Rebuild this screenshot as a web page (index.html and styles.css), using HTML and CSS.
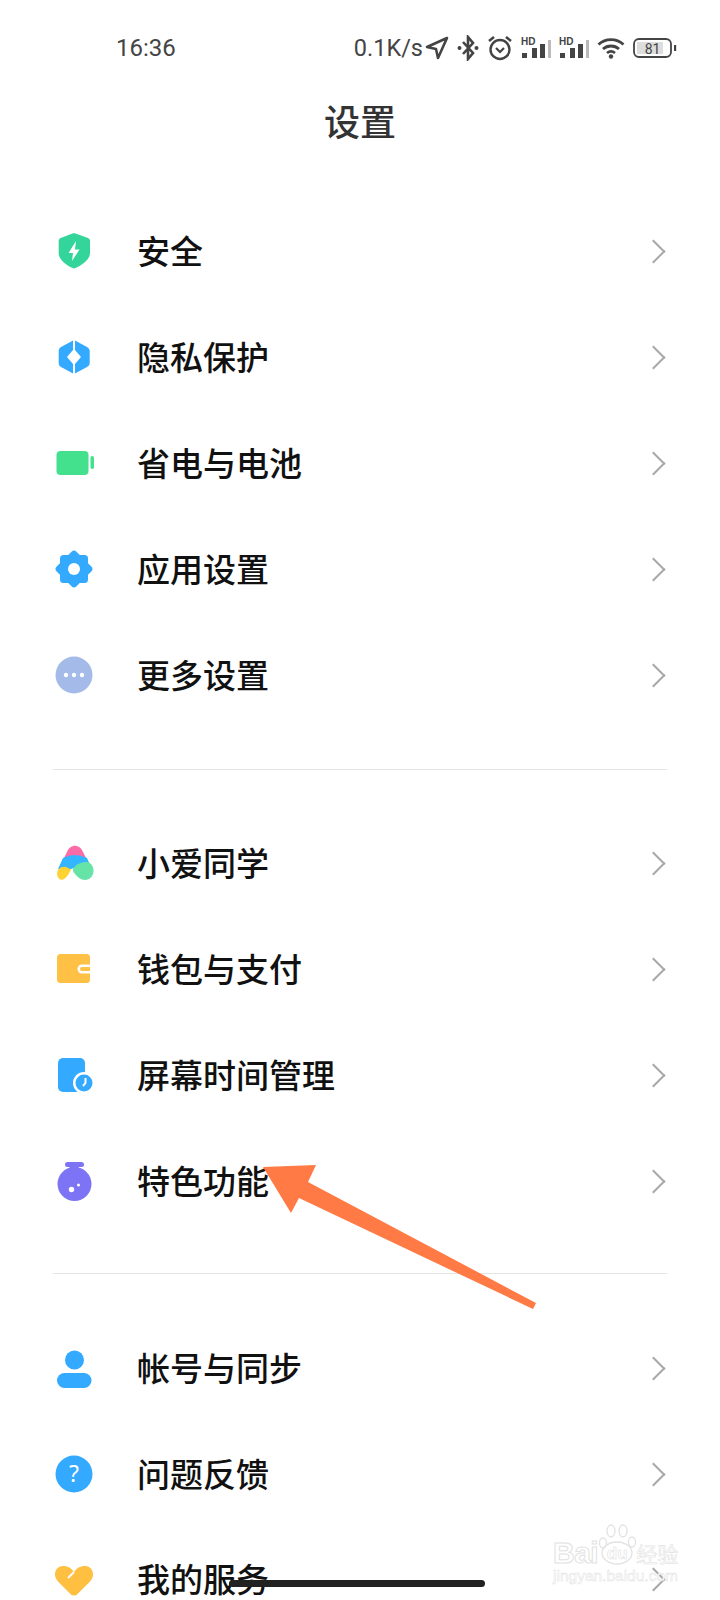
FILE: index.html
```html
<!DOCTYPE html>
<html lang="zh-CN">
<head>
  <meta charset="UTF-8">
  <title>设置</title>
  <link rel="stylesheet" href="styles.css">
</head>
<body>
<div class="screen">

  <div class="status">
    <span class="time">16:36</span>
    <div class="status-right">
      <span class="speed">0.1K/s</span>
      <svg class="st-nav" width="24" height="24" viewBox="0 0 24 24"><path d="M22 2 L2 11 L11 13 L13 22 Z" fill="none" stroke="#444" stroke-width="2.6" stroke-linejoin="round"/></svg>
      <svg width="22" height="26" viewBox="0 0 22 26"><path d="M6 7 L16 18 L11 24 V2 L16 8 L6 19" fill="none" stroke="#444" stroke-width="2.6"/><circle cx="2.5" cy="13" r="2" fill="#444"/><circle cx="19.5" cy="13" r="2" fill="#444"/></svg>
      <svg width="26" height="26" viewBox="0 0 26 26"><circle cx="13" cy="14.5" r="9.5" fill="none" stroke="#444" stroke-width="2.4"/><path d="M9 13 L13 17 L17 13" fill="none" stroke="#444" stroke-width="2.2"/><path d="M2 6 L7 2 M24 6 L19 2" stroke="#444" stroke-width="2.6"/></svg>
      <svg width="30" height="22" viewBox="0 0 30 22"><text class="hd" x="0" y="8">HD</text><rect x="1" y="16" width="5" height="5" fill="#444"/><rect x="11" y="11" width="5" height="10" fill="#444"/><rect x="19" y="7" width="5" height="14" fill="#444"/><rect x="27" y="3" width="3" height="18" fill="#bbb"/></svg>
      <svg width="30" height="22" viewBox="0 0 30 22"><text class="hd" x="0" y="8">HD</text><rect x="1" y="16" width="5" height="5" fill="#444"/><rect x="11" y="11" width="5" height="10" fill="#444"/><rect x="19" y="7" width="5" height="14" fill="#444"/><rect x="27" y="3" width="3" height="18" fill="#bbb"/></svg>
      <svg class="st-wifi" width="28" height="22" viewBox="0 0 28 22"><path d="M1.5 7.5 C8.5 1 19.5 1 26.5 7.5 M6 12 C10.500 8 17.500 8 22 12 M10 16 C12.500 14 15.500 14 18 16" fill="none" stroke="#444" stroke-width="2.800"/><circle cx="14" cy="19.500" r="2.200" fill="#444"/></svg>
      <svg class="st-batt" width="44" height="20" viewBox="0 0 44 20"><rect x="1" y="1" width="37" height="18" rx="5" fill="none" stroke="#444" stroke-width="1.800"/><rect x="4" y="4" width="26" height="12" fill="#ddd"/><text class="batt-num" x="19.500" y="15.500">81</text><rect x="41" y="7" width="2.200" height="6" fill="#444"/></svg>
    </div>
  </div>

  <h1 class="title">设置</h1>

  <div class="group">
    <div class="row">
      <svg class="icon" viewBox="0 0 40 40"><path d="M18.500 2.600 C19.500 2.200 20.500 2.200 21.500 2.600 L34 7 C35.300 7.500 36 8.500 36 10 V22 C36 29 27 35 20 37.500 C13 35 4.700 29 4.700 22 V10 C4.700 8.500 5.400 7.500 6.700 7 Z" fill="#33D59B"/><path d="M22 10 L14.500 22 H19 L18 30 L25.500 18.500 H21 Z" fill="#fff"/></svg>
      <span class="label">安全</span><i class="chevron"></i>
    </div>
    <div class="row">
      <svg class="icon" viewBox="0 0 40 40"><path d="M19 3.500 V13 L13 20 L19 27 V36.500 L7 30 C5.500 29 4.700 28 4.700 26 V14 C4.700 12 5.500 11 7 10 Z" fill="#33A9FF"/><path d="M21 3.500 V13 L27 20 L21 27 V36.500 L33 30 C34.500 29 35.700 28 35.700 26 V14 C35.700 12 34.500 11 33 10 Z" fill="#33A9FF"/></svg>
      <span class="label">隐私保护</span><i class="chevron"></i>
    </div>
    <div class="row">
      <svg class="icon" viewBox="0 0 40 40"><rect x="2.500" y="8" width="32" height="24" rx="4" fill="#43E08E"/><rect x="36.500" y="13" width="3.500" height="13" rx="1.700" fill="#43E08E"/></svg>
      <span class="label">省电与电池</span><i class="chevron"></i>
    </div>
    <div class="row">
      <svg class="icon" viewBox="0 0 40 40"><rect x="6" y="6" width="28" height="28" rx="3.500" fill="#33A9FF"/><rect x="6" y="6" width="28" height="28" rx="3.500" fill="#33A9FF" transform="rotate(45 20 20)"/><circle cx="20" cy="20" r="6" fill="#fff"/></svg>
      <span class="label">应用设置</span><i class="chevron"></i>
    </div>
    <div class="row">
      <svg class="icon" viewBox="0 0 40 40"><circle cx="20" cy="20" r="18.500" fill="#A4BBEA"/><circle cx="12" cy="20" r="2.200" fill="#fff"/><circle cx="20" cy="20" r="2.200" fill="#fff"/><circle cx="28" cy="20" r="2.200" fill="#fff"/></svg>
      <span class="label">更多设置</span><i class="chevron"></i>
    </div>
  </div>

  <hr class="divider divider-first">

  <div class="group">
    <div class="row">
      <svg class="icon" viewBox="0 0 40 40"><path d="M13 9 C16 0.500 26 0.500 29 9 L35 21 H7 Z" fill="#FB6BA6"/><path d="M4 26 L9 15 Q21 9 33 15 L37 24 L28 35 L20 25 L14 27 Z" fill="#33B5FF"/><path d="M4 27 C6 24 9 23.500 12 24 L17 26.500 C15 31 12.500 35 9 36.500 C4.500 38 1.500 32 4 27 Z" fill="#FFD233"/><path d="M19 26 C22 21 27 19 32 19 C37 19 39.500 23.500 39.500 28 C39.500 33 35.500 37 31 37 C26 37 21 32 19 28 Z" fill="#66E3A6"/></svg>
      <span class="label">小爱同学</span><i class="chevron"></i>
    </div>
    <div class="row">
      <svg class="icon" viewBox="0 0 40 40"><rect x="3" y="5" width="33" height="29" rx="3.500" fill="#FFC145"/><path d="M36 15.500 H28 A4.500 4.500 0 0 0 28 24.500 H36 V22 H28 A2 2 0 0 1 28 18 H36 Z" fill="#fff"/></svg>
      <span class="label">钱包与支付</span><i class="chevron"></i>
    </div>
    <div class="row">
      <svg class="icon" viewBox="0 0 40 40"><rect x="4" y="3" width="27" height="34" rx="5" fill="#33A9FF"/><circle cx="30" cy="28" r="11" fill="#fff"/><circle cx="30" cy="28" r="8.500" fill="#33A9FF"/><path d="M31.500 23 L31.500 28 L29 31" fill="none" stroke="#fff" stroke-width="2"/></svg>
      <span class="label">屏幕时间管理</span><i class="chevron"></i>
    </div>
    <div class="row">
      <svg class="icon" viewBox="0 0 40 40"><rect x="11" y="1" width="19" height="5" rx="2.500" fill="#7C74F5"/><rect x="15.500" y="4" width="9" height="8" fill="#7C74F5"/><circle cx="20.500" cy="23" r="17" fill="#7C74F5"/><circle cx="17.500" cy="28.500" r="2.700" fill="#fff"/><circle cx="24.500" cy="24" r="1.500" fill="#fff"/></svg>
      <span class="label">特色功能</span><i class="chevron"></i>
    </div>
  </div>

  <hr class="divider">

  <div class="group">
    <div class="row">
      <svg class="icon" viewBox="0 0 40 40"><circle cx="20.500" cy="12" r="9.500" fill="#33A9FF"/><rect x="3" y="25" width="34.500" height="15" rx="7.500" fill="#33A9FF"/></svg>
      <span class="label">帐号与同步</span><i class="chevron"></i>
    </div>
    <div class="row">
      <svg class="icon" viewBox="0 0 40 40"><circle cx="20" cy="20" r="18.500" fill="#33A9FF"/><text class="qmark" x="20" y="27.500">?</text></svg>
      <span class="label">问题反馈</span><i class="chevron"></i>
    </div>
    <div class="row row-cut">
      <svg class="icon" viewBox="0 0 40 40"><path d="M20 13 C23 8.500 27 7 31 7 C36.500 7 39 11.500 39 15.500 C39 18 38 20 36 22.500 L23.500 35 C21.500 37 18.500 37 16.500 35 L4 22.500 C2 20 1 18 1 15.500 C1 11.500 3.500 7 9 7 C13 7 17 8.500 20 13 Z" fill="#FFBF40"/><path d="M20 13 L14 19" stroke="#fff" stroke-width="2"/></svg>
      <span class="label">我的服务</span><i class="chevron"></i>
    </div>
  </div>

  <!-- annotation arrow drawn over the screenshot -->
  <svg class="arrow" width="720" height="1600" viewBox="0 0 720 1600"><path d="M263 1167 L316 1165 L308 1182 L536 1303 L533 1309 L299 1198 L291 1213 Z" fill="#FF7A45"/></svg>

  <div class="home-bar"></div>

  <div class="watermark">
    <div class="wm-top">
      <span class="wm-bai">Bai</span>
      <span class="wm-du">
        <svg class="wm-paw" width="40" height="44" viewBox="0 0 40 44"><g fill="none" stroke="#e2e2e2" stroke-width="1.300"><ellipse cx="5" cy="21" rx="3.500" ry="5"/><ellipse cx="13" cy="9" rx="4" ry="6"/><ellipse cx="25" cy="9" rx="4" ry="6"/><ellipse cx="34" cy="20" rx="3.500" ry="5"/><ellipse cx="19" cy="31" rx="15" ry="11"/></g></svg>
        du
      </span>
      <span class="wm-jy">经验</span>
    </div>
    <div class="wm-url">jingyan.baidu.com</div>
  </div>

</div>
</body>
</html>
```
FILE: styles.css
```css
html, body {
  margin: 0;
  padding: 0;
  background: #fff;
}

.screen {
  position: relative;
  width: 720px;
  height: 1600px;
  overflow: hidden;
  font-family: "Noto Sans CJK SC", "Noto Sans", sans-serif;
}

/* status bar */
.status {
  display: flex;
  align-items: center;
  justify-content: space-between;
  height: 95px;
  padding: 0 43px 0 116px;
  color: #444;
}
.time {
  font-family: Roboto, sans-serif;
  font-size: 24px;
}
.status-right {
  display: flex;
  align-items: center;
  gap: 8px;
}
.speed {
  font-family: Roboto, sans-serif;
  font-size: 23.500px;
  margin-right: -6px;
}
.hd {
  font: bold 10px "Liberation Sans", sans-serif;
  fill: #444;
}
.batt-num {
  font: 14px Roboto, sans-serif;
  fill: #444;
  text-anchor: middle;
}

.title {
  margin: 0;
  height: 103px;
  line-height: 50px;
  text-align: center;
  font-size: 36px;
  font-weight: 500;
  color: #333;
}

/* settings list */
.row {
  display: flex;
  align-items: center;
  height: 106px;
  padding: 0 58px 0 54px;
}
/* last row runs off the bottom of the screen */
.row-cut {
  height: 40px;
  padding-top: 32px;
}
.icon {
  width: 40px;
  height: 40px;
  flex-shrink: 0;
  margin-right: 43px;
}
.label {
  flex: 1;
  font-size: 33px;
  font-weight: 500;
  line-height: 1.2;
  color: #111;
}
.chevron {
  width: 17px;
  height: 17px;
  box-sizing: border-box;
  border-top: 2px solid #a8a8a8;
  border-right: 2px solid #a8a8a8;
  transform: rotate(45deg);
}
.qmark {
  font: 23px "Noto Sans", sans-serif;
  fill: #fff;
  text-anchor: middle;
}

.divider {
  margin: 39px 53px 41px;
  height: 1px;
  border: 0;
  background: #e4e4e4;
}
.divider-first {
  margin-top: 41px;
  margin-bottom: 40px;
}

/* overlays */
.arrow {
  position: absolute;
  left: 0;
  top: 0;
}
.home-bar {
  position: absolute;
  left: 229px;
  top: 1580px;
  width: 256px;
  height: 7px;
  border-radius: 4px;
  background: #222;
}
.watermark {
  position: absolute;
  left: 553px;
  top: 1522px;
  width: 130px;
  color: #fff;
  -webkit-text-stroke: 1px #e2e2e2;
}
.wm-top {
  display: flex;
  align-items: flex-end;
  height: 44px;
}
.wm-bai {
  font: bold 30px/26px "Liberation Sans", sans-serif;
  letter-spacing: -0.5px;
}
.wm-du {
  position: relative;
  width: 38px;
  height: 44px;
  box-sizing: border-box;
  padding-top: 22px;
  text-align: center;
  font: bold 17px/20px "Liberation Sans", sans-serif;
  -webkit-text-stroke: 0.6px #e2e2e2;
}
.wm-paw {
  position: absolute;
  left: 0;
  top: 0;
}
.wm-jy {
  font-size: 21px;
  line-height: 26px;
  -webkit-text-stroke: 0.6px #e2e2e2;
}
.wm-url {
  margin-top: 1px;
  font: 15.500px/18px "Liberation Sans", sans-serif;
  -webkit-text-stroke: 0.5px #e2e2e2;
}
```
